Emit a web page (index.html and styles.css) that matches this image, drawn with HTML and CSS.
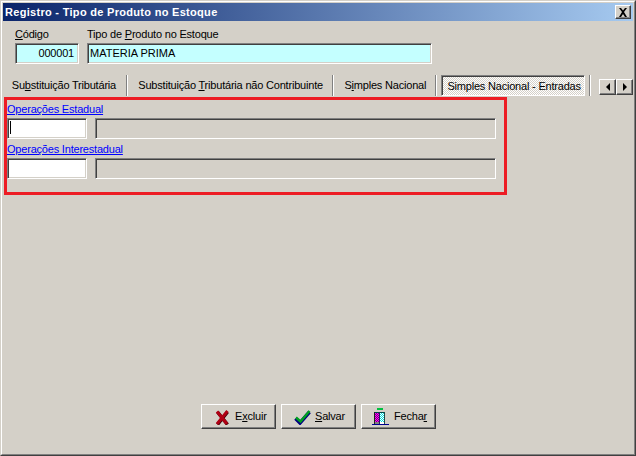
FILE: index.html
```html
<!DOCTYPE html>
<html lang="pt">
<head>
<meta charset="utf-8">
<title>Registro - Tipo de Produto no Estoque</title>
<link rel="stylesheet" href="styles.css">
</head>
<body>
<div class="window">
  <div class="window-inner">
    <header class="titlebar">
      <span class="title">Registro - Tipo de Produto no Estoque</span>
      <span class="close raised">
        <svg width="10" height="9" viewBox="0 0 10 9"><path d="M1 0h2l2 2.500 2-2.500h2l-3 4 3 5h-2l-2-3-2 3h-2l3-5z" fill="#000"/></svg>
      </span>
    </header>

    <section class="form-row">
      <div class="field field-code">
        <label class="label"><u>C</u>ódigo</label>
        <div class="input cyan right">000001</div>
      </div>
      <div class="field field-type">
        <label class="label">Tipo de <u>P</u>roduto no Estoque</label>
        <div class="input cyan wide-text">MATERIA PRIMA</div>
      </div>
    </section>

    <nav class="tabs">
      <div class="tab tab-1"><span>Su<u>b</u>stituição Tributária</span></div>
      <div class="tab tab-2"><span>Substituição <u>T</u>ributária não Contribuinte</span></div>
      <div class="tab tab-3"><span>S<u>i</u>mples Nacional</span></div>
      <div class="tab-active"><span>Simples Nacional - Entradas</span></div>
      <div class="tab-end"></div>
      <div class="scrollers">
        <span class="scroll raised"><i class="arrow arrow-left"></i></span>
        <span class="scroll raised"><i class="arrow arrow-right"></i></span>
      </div>
    </nav>

    <section class="panel">
      <a class="link" href="#">Operações Estadual</a>
      <div class="lookup">
        <div class="input code white"><i class="caret"></i></div>
        <div class="input desc"></div>
      </div>
      <a class="link" href="#">Operações Interestadual</a>
      <div class="lookup">
        <div class="input code white"></div>
        <div class="input desc"></div>
      </div>
    </section>

    <footer class="actions">
      <button class="btn raised btn-del" type="button">
        <svg width="15" height="16" viewBox="0 0 15 16" fill="none">
          <path d="M2.500 3 12.500 15.500M12.500 3 2.500 15.500" stroke="#400008" stroke-width="3.500"/>
          <path d="M2 2.500 12 15M12.500 2 2 15" stroke="#b00014" stroke-width="3"/>
        </svg>
        <span>E<u>x</u>cluir</span>
      </button>
      <button class="btn raised btn-save" type="button">
        <svg width="17" height="16" viewBox="0 0 17 16" fill="none">
          <path d="M1.500 9.500 6 14 15.500 3" stroke="#000080" stroke-width="3.500"/>
          <path d="M2 8.500 6.500 12.500 15.500 2" stroke="#00a020" stroke-width="2.500"/>
        </svg>
        <span><u>S</u>alvar</span>
      </button>
      <button class="btn raised btn-close" type="button">
        <svg width="18" height="19" viewBox="0 0 18 19">
          <defs>
            <pattern id="mag" width="2" height="2" patternUnits="userSpaceOnUse">
              <rect width="2" height="2" fill="#ff00ff"/>
              <rect width="1" height="1" fill="#800080"/>
              <rect x="1" y="1" width="1" height="1" fill="#800080"/>
            </pattern>
            <pattern id="cya" width="2" height="2" patternUnits="userSpaceOnUse">
              <rect width="2" height="2" fill="#00e0e0"/>
              <rect width="1" height="1" fill="#fff"/>
              <rect x="1" y="1" width="1" height="1" fill="#fff"/>
            </pattern>
          </defs>
          <rect x="5" y="1" width="6" height="2" fill="#00c040"/>
          <rect x="2" y="5" width="11" height="1" fill="#004848"/>
          <rect x="2" y="5" width="1" height="12" fill="#202020"/>
          <rect x="3" y="6" width="4" height="9" fill="url(#mag)"/>
          <rect x="7" y="5" width="1" height="12" fill="#202060"/>
          <rect x="8" y="6" width="4" height="9" fill="url(#cya)"/>
          <rect x="12" y="5" width="1" height="12" fill="#204848"/>
          <rect x="3" y="15" width="4" height="2" fill="#808080"/>
          <rect x="8" y="15" width="4" height="2" fill="#fff"/>
          <rect x="0" y="17" width="17" height="1" fill="#000090"/>
        </svg>
        <span>Fecha<u>r</u></span>
      </button>
    </footer>
  </div>
</div>
</body>
</html>
```

FILE: styles.css
```css
* { box-sizing: border-box; }
html, body { margin: 0; height: 100%; }
body {
  font-family: "Liberation Sans", Arial, sans-serif;
  font-size: 11px;
  letter-spacing: -0.2px;
  color: #000;
  background: #d4d0c8;
  overflow: hidden;
}
.window {
  height: 456px;
  border: 1px solid;
  border-color: #d4d0c8 #404040 #404040 #d4d0c8;
}
.window-inner {
  height: 100%;
  display: flex;
  flex-direction: column;
  border: 1px solid;
  border-color: #fff #808080 #808080 #fff;
  padding: 1px;
  background: #d4d0c8;
}
.titlebar {
  height: 18px;
  flex: none;
  display: flex;
  align-items: center;
  justify-content: space-between;
  padding: 0 2px;
  background: linear-gradient(90deg, #0a246a, #a6caf0);
}
.title {
  color: #fff;
  font-weight: bold;
  font-size: 11px;
  letter-spacing: 0.3px;
}
.raised {
  background: #d4d0c8;
  border: 1px solid;
  border-color: #fff #404040 #404040 #fff;
  box-shadow: inset -1px -1px 0 #808080;
}
.close {
  width: 16px;
  height: 14px;
  display: flex;
  align-items: center;
  justify-content: center;
}
.form-row {
  display: flex;
  gap: 8px;
  padding: 6px 0 0 12px;
  flex: none;
}
.field { display: flex; flex-direction: column; gap: 2px; }
.field-code { width: 64px; }
.field-type { width: 345px; }
.label { line-height: 14px; }
.input {
  height: 21px;
  line-height: 17px;
  border: 1px solid;
  border-color: #808080 #fff #fff #808080;
  box-shadow: inset 1px 1px 0 #404040, inset -1px -1px 0 #d4d0c8;
  padding: 1px 4px 1px 2px;
  white-space: nowrap;
}
.cyan { background: #c4ffff; }
.white { background: #fff; }
.right { text-align: right; }
.wide-text { letter-spacing: 0; }
.tabs {
  display: flex;
  align-items: stretch;
  height: 21px;
  margin-top: 11px;
  flex: none;
}
.tab {
  display: flex;
  align-items: center;
  justify-content: center;
  padding-bottom: 2px;
  border-right: 1px solid #fff;
  box-shadow: inset -1px 0 0 #808080;
}
.tab-1 { width: 125px; padding-right: 2px; }
.tab-2 { width: 207px; }
.tab-3 { width: 103px; }
.tab-active {
  width: 144px;
  margin-left: 4px;
  padding-left: 2px;
  display: flex;
  align-items: center;
  justify-content: center;
  border: 1px solid;
  border-color: #808080 #fff #fff #808080;
  box-shadow: inset 1px 1px 0 #404040;
  background: repeating-conic-gradient(#fff 0 25%, #d4d0c8 0 50%) 0 0 / 2px 2px;
}
.tab-end {
  width: 2px;
  margin-left: 4px;
  background: #808080;
  border-right: 1px solid #fff;
}
.scrollers {
  display: flex;
  margin: 4px 0 1px 8px;
}
.scroll {
  width: 17px;
  height: 16px;
  display: flex;
  align-items: center;
  justify-content: center;
}
.arrow { width: 0; height: 0; border: 4px solid transparent; }
.arrow-left { border-right-color: #000; border-left-width: 0; }
.arrow-right { border-left-color: #000; border-right-width: 0; }
.panel {
  width: 503px;
  height: 98px;
  margin: 1px 0 0 1px;
  padding: 2px 0 0 0;
  border: 3px solid #ed1c24;
  flex: none;
}
.link {
  display: block;
  height: 15px;
  line-height: 14px;
  color: #0000ff;
  text-decoration: underline;
}
.lookup {
  display: flex;
  gap: 8px;
  margin: 1px 0 3px;
}
.code { width: 80px; }
.desc { width: 401px; }
.caret {
  display: block;
  width: 1px;
  height: 13px;
  margin-top: 1px;
  background: #000;
}
.actions {
  margin-top: auto;
  padding: 0 0 24px 1px;
  display: flex;
  justify-content: center;
  gap: 5px;
  flex: none;
}
.btn {
  width: 75px;
  height: 25px;
  padding: 0 0 2px;
  font: inherit;
  letter-spacing: inherit;
  color: #000;
  display: flex;
  align-items: center;
}
.btn svg { margin-top: 2px; }
.btn-del { padding-left: 13px; gap: 5px; }
.btn-save { padding-left: 12px; gap: 4px; }
.btn-close { padding-left: 10px; gap: 4px; }
```
